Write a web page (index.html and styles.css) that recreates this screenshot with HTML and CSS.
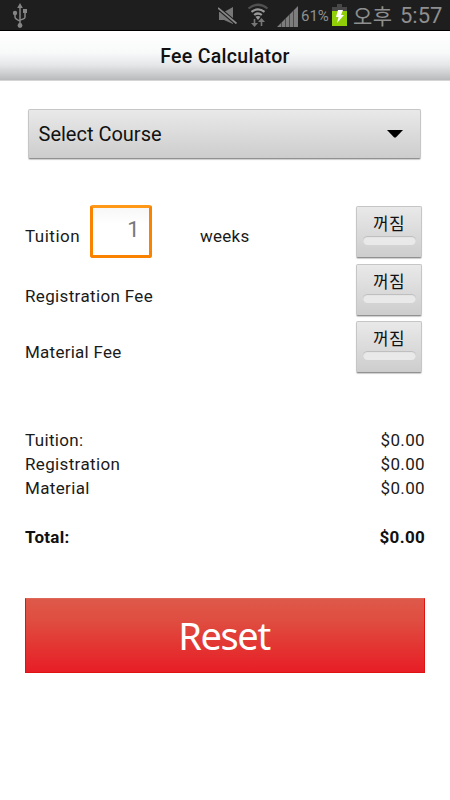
FILE: index.html
```html
<!DOCTYPE html>
<html lang="ko">
<head>
<meta charset="utf-8">
<title>Fee Calculator</title>
<link rel="stylesheet" href="styles.css">
</head>
<body>
<div class="status">
  <svg class="usb" width="16" height="26" viewBox="0 0 16 26" fill="none" stroke="#858585" stroke-width="1.5">
    <path d="M8 5v17M3 10v4q0 2 5 4M13 9v5q0 2-5 3"/>
    <g fill="#858585" stroke="none"><path d="M8 0l2.800 5H5.200z"/><circle cx="3" cy="10" r="2.200"/><path d="M11 6h4v4h-4z"/><circle cx="8" cy="22.500" r="2.400"/></g>
  </svg>
  <svg class="mute" width="20" height="20" viewBox="0 0 20 20">
    <path fill="#777" d="M1 6h5l9-5v17l-9-4H1z"/>
    <path stroke="#1e1e1e" stroke-width="4" d="M0 2l19 16"/>
    <path stroke="#888" stroke-width="1.700" d="M0 2l18.500 15.500"/>
  </svg>
  <svg class="wifi" width="22" height="25" viewBox="0 0 22 25" fill="none">
    <path stroke="#505050" stroke-width="2.200" d="M1.500 5.500q9.500-7.500 19 0"/>
    <path stroke="#999" stroke-width="2.200" d="M4.500 8.800q6.500-5 13 0M7.200 12q3.800-3 7.600 0"/>
    <path fill="#999" d="M8.500 13.800q2.500-1.700 5 0L11 17z"/>
    <path stroke="#777" stroke-width="1.600" d="M7.500 16v6M14.500 23v-6"/>
    <path fill="#777" d="M4 20h7l-3.500 4zM11 19h7l-3.500-4z"/>
  </svg>
  <svg class="signal" width="21" height="21" viewBox="0 0 21 21" fill="#7d7d7d">
    <path d="M0 21l4-4v4zM4.500 16.500l3.500-3.500v8H4.500zM8.500 12.500L12 9v12H8.500zM12.500 8.500L16 5v16h-3.500zM16.500 4.500L21 0v21h-4.500z"/>
  </svg>
  <span class="percent">61%</span>
  <svg class="battery" width="15" height="22" viewBox="0 0 15 22">
    <path fill="#484848" d="M5 0h5v3h5v5H0V3h5z"/><path fill="#91cf08" d="M0 7h15v15H0z"/>
    <path fill="#fff" d="M6 6h5l-2 5h3l-7 8 1.500-6H4z"/>
  </svg>
  <span class="meridiem">오후</span><span class="clock">5:57</span>
</div>
<header class="header">Fee Calculator</header>
<main class="main">
  <div class="select"><span>Select Course</span><svg width="16" height="8" viewBox="0 0 16 8"><path d="M0 0h16L8.800 7.500H7.200z"/></svg></div>
  <div class="fees">
    <div class="row first"><span class="label">Tuition</span><div class="field">1</div><span class="weeks">weeks</span><div class="toggle">꺼짐<i></i></div></div>
    <div class="row second"><span class="label">Registration Fee</span><div class="toggle">꺼짐<i></i></div></div>
    <div class="row third"><span class="label">Material Fee</span><div class="toggle">꺼짐<i></i></div></div>
  </div>
  <div class="summary">
    <div class="line"><span>Tuition:</span><span>$0.00</span></div>
    <div class="line"><span>Registration</span><span>$0.00</span></div>
    <div class="line"><span>Material</span><span>$0.00</span></div>
    <div class="line total"><span>Total:</span><span>$0.00</span></div>
  </div>
  <div class="reset"><span>Reset</span></div>
</main>
</body>
</html>
```
FILE: styles.css
```css
* { box-sizing: border-box; }
body {
  margin: 0;
  width: 450px;
  height: 800px;
  overflow: hidden;
  background: #fff;
  color: #1a1a1a;
  font-family: Roboto, "Noto Sans CJK KR", sans-serif;
}
svg { display: block; flex: none; }
.status {
  display: flex;
  align-items: flex-start;
  height: 31px;
  background: #1e1e1e;
  border-bottom: 1px solid #000;
  color: #8f8f8f;
  white-space: nowrap;
}
.usb { margin: 3px 0 0 12px; }
.mute { margin: 6px 0 0 190px; }
.wifi { margin: 3px 0 0 9px; }
.signal { margin: 6px 0 0 8px; }
.percent { width: 29px; margin: 6px 0 0 3px; font-size: 15px; line-height: 20px; letter-spacing: 0; }
.battery { margin: 4px 0 0 2px; }
.meridiem { width: 41px; margin-left: 6px; font: 21px/30px "Noto Sans CJK KR", sans-serif; letter-spacing: 0.4px; }
.clock { margin-left: 6px; font-size: 22px; line-height: 31px; }
.header {
  height: 50px;
  background: linear-gradient(#fff, #f8f9f9 45%, #e5e6e7 70%, #b9babc);
  border-bottom: 1px solid #d5d5d6;
  color: #111;
  text-align: center;
  font-size: 19.5px;
  font-weight: 500;
  line-height: 52px;
  letter-spacing: 0.3px;
}
.main { padding: 28px 25px 0; }
.select, .toggle {
  background: linear-gradient(#e9e9e9, #cdcdcd);
  border: 1px solid #c6c6c6;
  border-bottom: 1px solid #919191;
  border-radius: 2px;
  box-shadow: 0 1px 1px #ccc;
}
.select {
  display: flex;
  align-items: center;
  justify-content: space-between;
  width: 393px;
  height: 50px;
  margin-left: 3px;
  padding: 0 17px 0 9.5px;
  color: #111;
  font-size: 20px;
}
.fees { padding-top: 47px; }
.row { display: flex; height: 57px; padding-right: 3px; font-size: 17px; letter-spacing: 0.35px; }
.row.first { height: 58px; }
.label, .weeks { line-height: 20px; padding-top: 20px; white-space: nowrap; }
.first .label { width: 65px; letter-spacing: 0.5px; }
.second .label, .third .label { padding-top: 22px; }
.third .label { padding-top: 21px; letter-spacing: 0.25px; }
.field {
  width: 62px;
  height: 53px;
  margin-top: -1px;
  border: 3px solid #f98200;
  border-top-color: #ff9818;
  border-radius: 3px;
  background: linear-gradient(#f7f7f7, #fff 35%);
  padding-right: 9px;
  color: #777;
  text-align: right;
  font-size: 22px;
  line-height: 43px;
}
.weeks { margin-left: 48px; letter-spacing: 0.25px; }
.toggle {
  width: 66px;
  height: 52px;
  margin-left: auto;
  text-align: center;
  color: #111;
  font: 17px/32px "Noto Sans CJK KR", sans-serif;
}
.toggle i {
  display: block;
  width: 53px;
  height: 9px;
  margin: -3px auto 0;
  border-radius: 5px;
  background: #e9e9e9;
  box-shadow: inset 0 1px 1px #bbb;
}
.summary { padding-top: 50px; font-size: 17px; letter-spacing: 0.35px; }
.line { display: flex; justify-content: space-between; height: 24px; line-height: 24px; }
.total { margin-top: 25px; color: #111; font-weight: 700; letter-spacing: 0.3px; }
.reset {
  display: flex;
  justify-content: center;
  height: 75px;
  margin-top: 49px;
  border: 1px solid #e11312;
  border-top-color: #dc6657;
  background: linear-gradient(#de594a, #df4d40 30%, #e71d25);
  color: #fff;
  font: 38px/72px "Noto Sans", sans-serif;
  letter-spacing: -1.4px;
}
.reset span { margin-left: -2px; }
```
